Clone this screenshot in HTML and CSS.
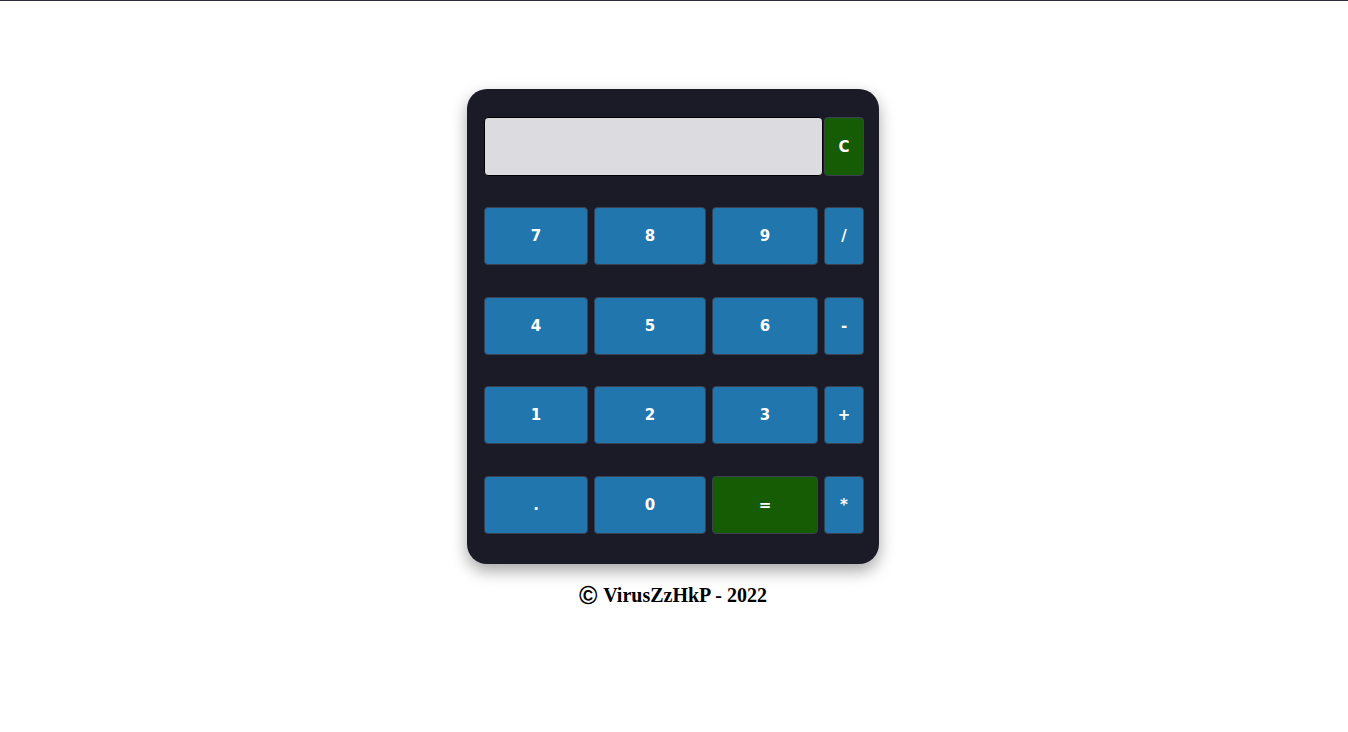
FILE: index.html
```html
<!DOCTYPE html>
<html lang="en">
<head>
<meta charset="utf-8">
<title>Calculator</title>
<link rel="stylesheet" href="styles.css">
</head>
<body>
<div class="topline"></div>
<main class="page">
  <div class="calc">
    <div class="screen-row">
      <div class="screen"></div>
      <button class="key key-green key-clear">C</button>
    </div>
    <div class="keys">
      <button class="key">7</button>
      <button class="key">8</button>
      <button class="key">9</button>
      <button class="key">/</button>
      <button class="key">4</button>
      <button class="key">5</button>
      <button class="key">6</button>
      <button class="key">-</button>
      <button class="key">1</button>
      <button class="key">2</button>
      <button class="key">3</button>
      <button class="key">+</button>
      <button class="key">.</button>
      <button class="key">0</button>
      <button class="key key-green">=</button>
      <button class="key">*</button>
    </div>
  </div>
  <p class="footer"><span class="copy">©</span> VirusZzHkP - 2022</p>
</main>
</body>
</html>
```
FILE: styles.css
```css
html, body {
  margin: 0;
  padding: 0;
  background: #ffffff;
}
.topline {
  height: 1px;
  background: #2b2d3a;
}
.page {
  display: flex;
  flex-direction: column;
  align-items: center;
  padding-top: 88px;
  padding-right: 2px;
}
.calc {
  width: 412px;
  height: 475px;
  box-sizing: border-box;
  padding: 28px 15px 0 17px;
  background: #1b1b28;
  border-radius: 20px;
  box-shadow: 0 7px 16px rgba(0, 0, 0, 0.35);
}
.screen-row {
  display: flex;
  height: 59px;
}
.screen {
  width: 339px;
  height: 59px;
  box-sizing: border-box;
  background: #dcdbe0;
  border: 1px solid #000;
  border-radius: 4px;
}
.keys {
  margin-top: 31px;
  display: grid;
  grid-template-columns: 104px 112px 106px 40px;
  grid-auto-rows: 58px;
  column-gap: 6px;
  row-gap: 31.67px;
}
.key {
  margin: 0;
  padding: 0;
  box-sizing: border-box;
  background: #2176ae;
  border: 1px solid #3b4150;
  border-radius: 4px;
  color: #ffffff;
  font-family: "DejaVu Sans", "Noto Sans", sans-serif;
  font-weight: bold;
  font-size: 15px;
}
.key-green {
  background: #155c04;
}
.key-clear {
  width: 40px;
  height: 59px;
  margin-left: 1px;
}
.footer {
  margin: 20px 0 0;
  font-family: "Liberation Serif", "Times New Roman", serif;
  font-weight: bold;
  font-size: 20px;
  line-height: 23px;
  color: #000;
}
.copy {
  font-family: "Liberation Sans", Arial, sans-serif;
  font-weight: bold;
  font-size: 25px;
  line-height: 0;
  margin-right: 1px;
  vertical-align: -2px;
}
```
